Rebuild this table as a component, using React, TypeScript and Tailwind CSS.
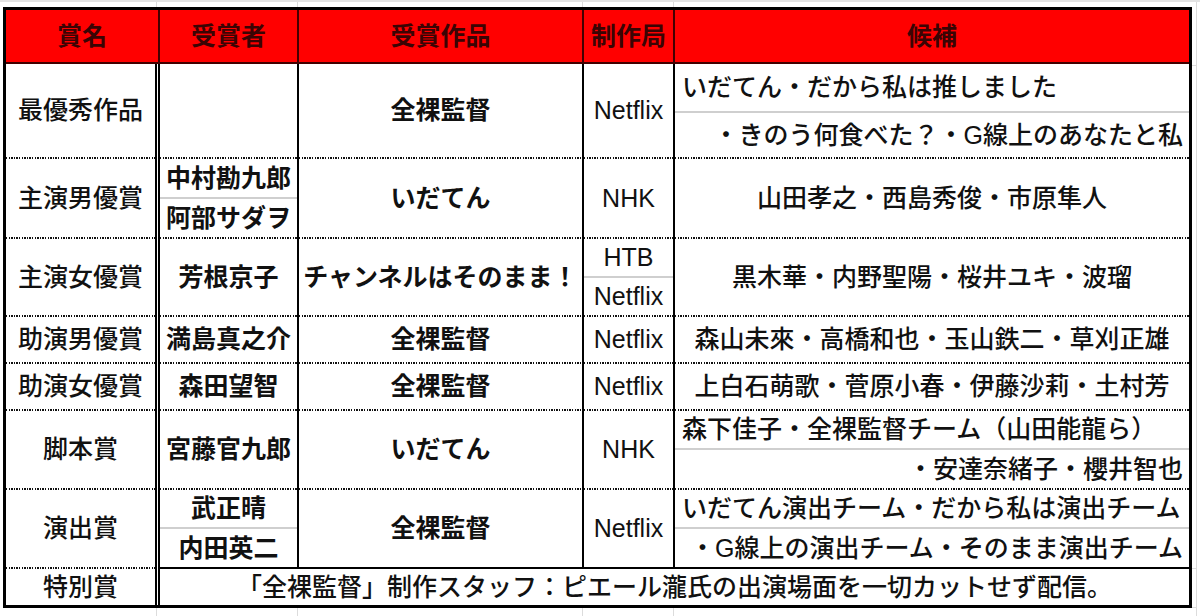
import React from "react";

type Bottom = "dotted" | "gray" | "solid" | "none";
type Right = "double" | "solid" | "none";
type Align = "center" | "left" | "right";

function Cell({
  place,
  children,
  bottom = "dotted",
  right = "solid",
  align = "center",
  bold = false,
}: {
  place: string;
  children?: React.ReactNode;
  bottom?: Bottom;
  right?: Right;
  align?: Align;
  bold?: boolean;
}) {
  const rightCls =
    right === "double"
      ? "border-r-[5px] border-double border-black"
      : right === "solid"
      ? "border-r-2 border-black"
      : "";
  const justify =
    align === "left"
      ? "justify-start pl-[7px]"
      : align === "right"
      ? "justify-end pr-[6px]"
      : "justify-center";
  return (
    <div className={`${place} flex flex-col min-h-0 ${rightCls}`}>
      <div
        className={`flex-1 flex items-center ${justify} whitespace-nowrap text-[#111] ${
          bold ? "font-bold" : "font-medium"
        }`}
      >
        {children}
      </div>
      {bottom === "dotted" && (
        <div className="h-[2px] bg-[repeating-linear-gradient(90deg,#111_0px,#111_1.4px,transparent_1.4px,transparent_2.6px)]" />
      )}
      {bottom === "gray" && <div className="border-b-2 border-[#cfcfcf]" />}
      {bottom === "solid" && <div className="border-b-2 border-black" />}
    </div>
  );
}

function Head({ place, children, last = false }: { place: string; children: React.ReactNode; last?: boolean }) {
  return (
    <div
      className={`${place} bg-[#ff0000] flex items-center justify-center font-bold text-[#3a0404] border-b-2 border-b-[#420000] ${
        last ? "" : "border-r-2 border-r-[#420000]"
      }`}
    >
      {children}
    </div>
  );
}

export default function App() {
  return (
    <div className="w-[1200px] h-[616px] bg-white flex flex-col overflow-hidden font-['Liberation_Sans','Noto_Sans_CJK_JP',sans-serif] text-[25px] leading-none">
      {/* top spreadsheet strip */}
      <div className="h-[7px] flex border-t-2 border-[#e3e3e3]">
        <div className="w-[157px] border-r border-[#dcdcdc]" />
        <div className="w-[141px] border-r border-[#dcdcdc]" />
        <div className="w-[285px] border-r border-[#dcdcdc]" />
        <div className="w-[91px] border-r border-[#dcdcdc]" />
        <div className="w-[523px] border-r border-[#dcdcdc]" />
        <div className="flex-1" />
      </div>

      <div className="flex h-[601px]">
        <div className="w-[3px]" />
        <div className="w-[1189px] h-[601px] border-[3px] border-black">
          <div className="grid h-full grid-cols-[154px_139px_285px_91px_514px] grid-rows-[54px_49px_46px_40px_40px_39px_39px_47px_47px_39px_40px_39px_40px_36px]">
            <Head place="col-start-1 row-start-1">賞名</Head>
            <Head place="col-start-2 row-start-1">受賞者</Head>
            <Head place="col-start-3 row-start-1">受賞作品</Head>
            <Head place="col-start-4 row-start-1">制作局</Head>
            <Head place="col-start-5 row-start-1" last>
              候補
            </Head>

            {/* column 1 : award names */}
            <Cell place="col-start-1 row-start-2 row-span-2" right="double">最優秀作品</Cell>
            <Cell place="col-start-1 row-start-4 row-span-2" right="double">主演男優賞</Cell>
            <Cell place="col-start-1 row-start-6 row-span-2" right="double">主演女優賞</Cell>
            <Cell place="col-start-1 row-start-8" right="double">助演男優賞</Cell>
            <Cell place="col-start-1 row-start-9" right="double">助演女優賞</Cell>
            <Cell place="col-start-1 row-start-10 row-span-2" right="double">脚本賞</Cell>
            <Cell place="col-start-1 row-start-12 row-span-2" right="double">演出賞</Cell>
            <Cell place="col-start-1 row-start-14" right="double" bottom="none">特別賞</Cell>

            {/* column 2 : winners */}
            <Cell place="col-start-2 row-start-2 row-span-2" bold />
            <Cell place="col-start-2 row-start-4" bottom="gray" bold>中村勘九郎</Cell>
            <Cell place="col-start-2 row-start-5" bold>阿部サダヲ</Cell>
            <Cell place="col-start-2 row-start-6 row-span-2" bold>芳根京子</Cell>
            <Cell place="col-start-2 row-start-8" bold>満島真之介</Cell>
            <Cell place="col-start-2 row-start-9" bold>森田望智</Cell>
            <Cell place="col-start-2 row-start-10 row-span-2" bold>宮藤官九郎</Cell>
            <Cell place="col-start-2 row-start-12" bottom="gray" bold>武正晴</Cell>
            <Cell place="col-start-2 row-start-13" bottom="solid" bold>内田英二</Cell>

            {/* column 3 : works */}
            <Cell place="col-start-3 row-start-2 row-span-2" bold>全裸監督</Cell>
            <Cell place="col-start-3 row-start-4 row-span-2" bold>いだてん</Cell>
            <Cell place="col-start-3 row-start-6 row-span-2" bold>チャンネルはそのまま！</Cell>
            <Cell place="col-start-3 row-start-8" bold>全裸監督</Cell>
            <Cell place="col-start-3 row-start-9" bold>全裸監督</Cell>
            <Cell place="col-start-3 row-start-10 row-span-2" bold>いだてん</Cell>
            <Cell place="col-start-3 row-start-12 row-span-2" bottom="solid" bold>全裸監督</Cell>

            {/* column 4 : broadcaster */}
            <Cell place="col-start-4 row-start-2 row-span-2">Netflix</Cell>
            <Cell place="col-start-4 row-start-4 row-span-2">NHK</Cell>
            <Cell place="col-start-4 row-start-6" bottom="gray">HTB</Cell>
            <Cell place="col-start-4 row-start-7">Netflix</Cell>
            <Cell place="col-start-4 row-start-8">Netflix</Cell>
            <Cell place="col-start-4 row-start-9">Netflix</Cell>
            <Cell place="col-start-4 row-start-10 row-span-2">NHK</Cell>
            <Cell place="col-start-4 row-start-12 row-span-2" bottom="solid">Netflix</Cell>

            {/* column 5 : nominees */}
            <Cell place="col-start-5 row-start-2" right="none" bottom="gray" align="left">
              いだてん・だから私は推しました
            </Cell>
            <Cell place="col-start-5 row-start-3" right="none" align="right">
              ・きのう何食べた？・G線上のあなたと私
            </Cell>
            <Cell place="col-start-5 row-start-4 row-span-2" right="none">
              山田孝之・西島秀俊・市原隼人
            </Cell>
            <Cell place="col-start-5 row-start-6 row-span-2" right="none">
              黒木華・内野聖陽・桜井ユキ・波瑠
            </Cell>
            <Cell place="col-start-5 row-start-8" right="none">
              森山未來・高橋和也・玉山鉄二・草刈正雄
            </Cell>
            <Cell place="col-start-5 row-start-9" right="none">
              上白石萌歌・菅原小春・伊藤沙莉・土村芳
            </Cell>
            <Cell place="col-start-5 row-start-10" right="none" bottom="gray" align="left">
              森下佳子・全裸監督チーム（山田能龍ら）
            </Cell>
            <Cell place="col-start-5 row-start-11" right="none" align="right">
              ・安達奈緒子・櫻井智也
            </Cell>
            <Cell place="col-start-5 row-start-12" right="none" bottom="gray" align="left">
              いだてん演出チーム・だから私は演出チーム
            </Cell>
            <Cell place="col-start-5 row-start-13" right="none" bottom="solid" align="right">
              ・G線上の演出チーム・そのまま演出チーム
            </Cell>

            {/* special award */}
            <Cell place="col-start-2 col-span-4 row-start-14" right="none" bottom="none">
              「全裸監督」制作スタッフ：ピエール瀧氏の出演場面を一切カットせず配信。
            </Cell>
          </div>
        </div>
        <div className="w-[8px] flex">
          <div className="w-[5px] flex flex-col border-r border-[#dcdcdc]">
            <div className="h-[59px] border-b border-[#dcdcdc]" />
            <div className="h-[503px] border-b border-[#dcdcdc]" />
            <div className="h-[39px] border-b border-[#dcdcdc]" />
          </div>
        </div>
      </div>

      {/* bottom spreadsheet strip */}
      <div className="h-[8px] flex">
        <div className="w-[157px] border-r border-[#dcdcdc]" />
        <div className="w-[141px] border-r border-[#dcdcdc]" />
        <div className="w-[285px] border-r border-[#dcdcdc]" />
        <div className="w-[91px] border-r border-[#dcdcdc]" />
        <div className="w-[523px] border-r border-[#dcdcdc]" />
        <div className="flex-1" />
      </div>
    </div>
  );
}
